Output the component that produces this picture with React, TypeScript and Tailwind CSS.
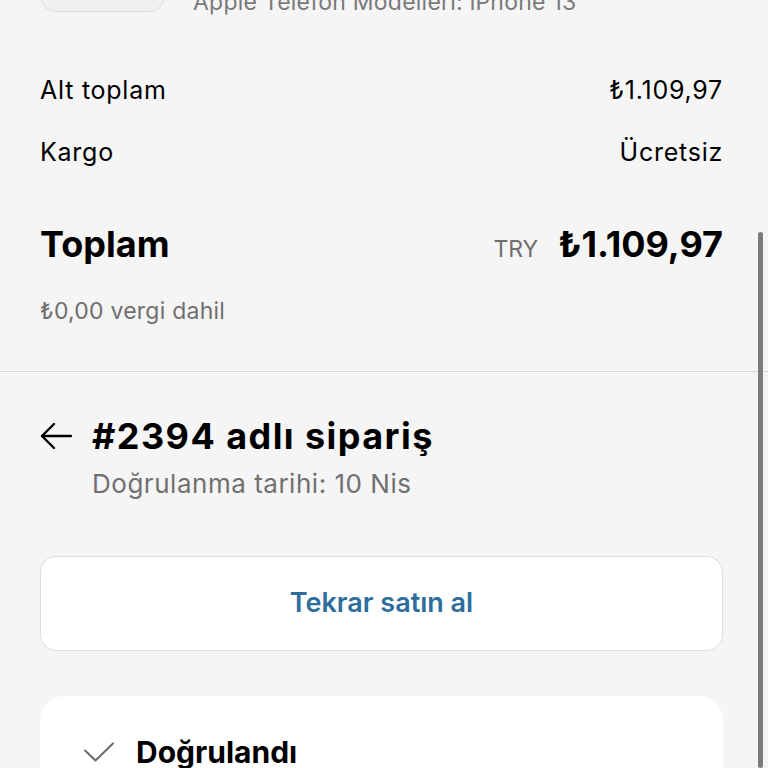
export default function App() {
  return (
    <div
      className="relative h-[768px] w-[768px] overflow-hidden bg-[#f5f5f5] text-black"
      style={{ fontFamily: "Inter, 'Noto Sans', sans-serif" }}
    >
      {/* product row, scrolled mostly out of view */}
      <div className="-mt-[68px] flex items-end gap-7 pl-10 pr-[45px]">
        <div className="h-20 w-[125px] shrink-0 rounded-2xl border border-[#dcdcdc] bg-[#f0f0f0]" />
        <p className="translate-y-[2px] text-[23px] leading-none tracking-[0.01em] text-[#7a7a7a]">
          Apple Telefon Modelleri: iPhone 13
        </p>
      </div>

      {/* totals */}
      <div className="mt-12 pl-10 pr-[45px]">
        <div className="flex h-[62px] items-center justify-between text-[25px] tracking-[0.03em]">
          <span>Alt toplam</span>
          <span>₺1.109,97</span>
        </div>
        <div className="flex h-[62px] items-center justify-between text-[25px] tracking-[0.03em]">
          <span>Kargo</span>
          <span>Ücretsiz</span>
        </div>
        <div className="mt-[30px] flex h-[60px] items-center justify-between">
          <span className="text-[36px] font-bold">Toplam</span>
          <div className="flex items-baseline gap-5">
            <span className="text-[23px] text-[#6f6f6f]">TRY</span>
            <span className="text-[36px] font-bold">₺1.109,97</span>
          </div>
        </div>
        <p className="mt-[20px] text-[23px] tracking-[0.01em] text-[#6f6f6f]">₺0,00 vergi dahil</p>
      </div>

      <div className="mt-[42px] h-px w-full bg-[#d6d6d6]" />

      {/* order header */}
      <div className="mt-[44px] flex gap-5 pl-10 pr-[45px]">
        <svg
          className="mt-[6px] h-7 w-8 shrink-0"
          viewBox="0 0 32 28"
          fill="none"
          stroke="currentColor"
          strokeWidth={2.4}
          strokeLinecap="round"
          strokeLinejoin="round"
        >
          <path d="M2 14h29" />
          <path d="M14 2 2 14l12 12" />
        </svg>
        <div>
          <h1 className="text-[36px] font-bold leading-[40px] tracking-[0.04em]">#2394 adlı sipariş</h1>
          <p className="mt-[12px] text-[26px] leading-8 tracking-[0.02em] text-[#707070]">
            Doğrulanma tarihi: 10 Nis
          </p>
        </div>
      </div>

      {/* reorder button */}
      <div className="mt-[56px] pl-10 pr-[45px]">
        <button className="flex h-[95px] w-full items-center justify-center rounded-2xl border border-[#dedede] bg-white text-[27px] font-semibold text-[#2d6e9c]">
          Tekrar satın al
        </button>
      </div>

      {/* status card */}
      <div className="mt-[45px] pl-10 pr-[45px]">
        <div className="h-[200px] rounded-3xl bg-white pl-11 pt-[34px]">
          <div className="flex items-center gap-[22px]">
            <svg
              className="h-5 w-[30px] shrink-0 text-[#6a6a6a]"
              viewBox="0 0 30 20"
              fill="none"
              stroke="currentColor"
              strokeWidth={2}
              strokeLinecap="round"
              strokeLinejoin="round"
            >
              <path d="M1 8.5 11.5 18.5 29 1.5" />
            </svg>
            <span className="text-[30px] font-bold">Doğrulandı</span>
          </div>
        </div>
      </div>

      {/* scrollbar overlay */}
      <div className="absolute bottom-0 right-[5px] top-[232px] w-[5px] rounded-full bg-[#7b7b7b]" />
    </div>
  );
}
